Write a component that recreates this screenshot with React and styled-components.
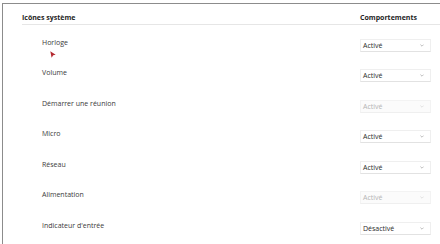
import React from 'react';
import styled, {createGlobalStyle} from 'styled-components';

const GlobalStyle = createGlobalStyle`
  html, body {
    margin: 0;
    padding: 0;
    background: #ffffff;
  }
  body {
    width: 440px;
    height: 244px;
    overflow: hidden;
    font-family: "Open Sans", "Noto Sans", sans-serif;
  }
`;

const Frame = styled.div`
  position: relative;
  margin: 3px 0 0 2px;
  height: 241px;
  border-top: 1px solid #8c8c8c;
  border-left: 1px solid #8c8c8c;
  padding-left: 19px;
  box-sizing: border-box;
`;

const HeaderRow = styled.div`
  display: grid;
  grid-template-columns: 1fr 80px;
  align-items: end;
  height: 21px;
  border-bottom: 1px solid #e6e6e6;
  box-sizing: border-box;
  padding-bottom: 2px;
`;

const HeaderCell = styled.div`
  font-size: 7px;
  font-weight: 700;
  color: #1e1e1e;
  line-height: 9px;
`;

const List = styled.div`
  padding-top: 5px;
`;

const Row = styled.div`
  display: grid;
  grid-template-columns: 1fr 71px;
  column-gap: 9px;
  padding-right: 9px;
  align-items: center;
  height: 30.5px;
`;

const Label = styled.div`
  padding-left: 20px;
  margin-top: -6px;
  font-size: 7px;
  line-height: 9px;
  color: #3a3a3a;
`;

const Select = styled.div`
  display: flex;
  align-items: center;
  justify-content: space-between;
  height: 13px;
  box-sizing: border-box;
  padding: 0 6px 0 2px;
  border: 1px solid ${p => (p.disabled ? '#f3f3f3' : '#efefef')};
  border-bottom-color: ${p => (p.disabled ? '#efefef' : '#e2e2e2')};
  background: ${p => (p.disabled ? '#fbfbfb' : '#ffffff')};
  font-size: 7px;
  color: ${p => (p.disabled ? '#b4b4b4' : '#2a2a2a')};
`;

const Chevron = styled.svg`
  width: 4px;
  height: 3px;
  flex: none;
`;

const Cursor = styled.svg`
  position: absolute;
  left: 47px;
  top: 47px;
  width: 6px;
  height: 7px;
`;

const rows = [
  {label: 'Horloge', value: 'Activé'},
  {label: 'Volume', value: 'Activé'},
  {label: 'Démarrer une réunion', value: 'Activé', disabled: true},
  {label: 'Micro', value: 'Activé'},
  {label: 'Réseau', value: 'Activé'},
  {label: 'Alimentation', value: 'Activé', disabled: true},
  {label: "Indicateur d'entrée", value: 'Désactivé'}
];

function Dropdown({value, disabled}) {
  return (
    <Select disabled={disabled}>
      <span>{value}</span>
      <Chevron viewBox="0 0 4 3">
        <path
          d="M0.4 0.6 L2 2.2 L3.6 0.6"
          fill="none"
          stroke={disabled ? '#d6d6d6' : '#a0a0a0'}
          strokeWidth="0.7"
        />
      </Chevron>
    </Select>
  );
}

export default function App() {
  return (
    <>
      <GlobalStyle />
      <Frame>
        <HeaderRow>
          <HeaderCell>Icônes système</HeaderCell>
          <HeaderCell>Comportements</HeaderCell>
        </HeaderRow>
        <List>
          {rows.map(r => (
            <Row key={r.label}>
              <Label>{r.label}</Label>
              <Dropdown value={r.value} disabled={r.disabled} />
            </Row>
          ))}
        </List>
        <Cursor viewBox="0 0 6 7">
          <polygon points="0.3,0.3 5.7,3.8 3.2,4.3 1.6,6.7" fill="#b52a30" />
        </Cursor>
      </Frame>
    </>
  );
}
